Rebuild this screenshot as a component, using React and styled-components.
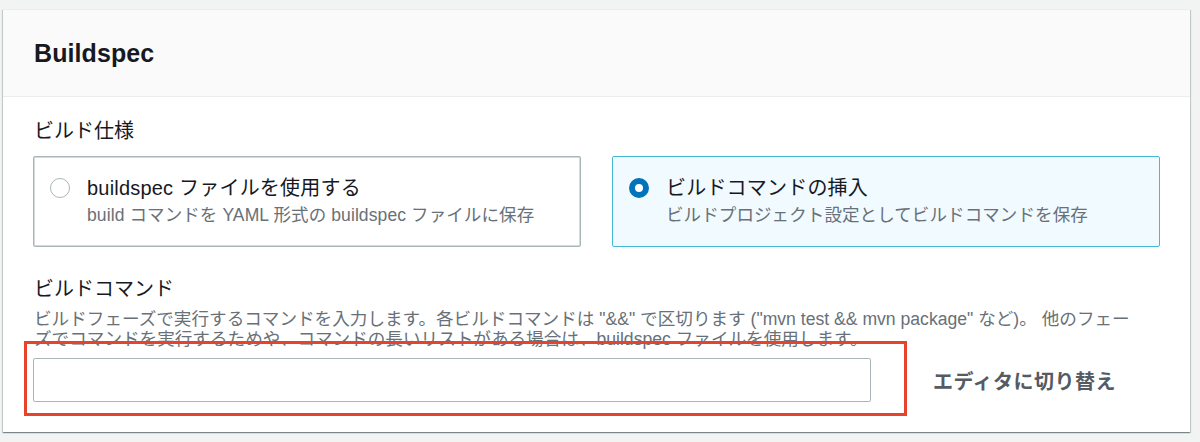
import React from "react";
import styled, { createGlobalStyle } from "styled-components";

const Global = createGlobalStyle`
  html, body { margin: 0; padding: 0; background: #f2f3f3; }
  body {
    font-family: "Liberation Sans", "Noto Sans CJK JP", sans-serif;
    color: #16191f;
  }
`;

const Page = styled.div`
  width: 1200px;
  height: 442px;
  padding: 9px 10px 0 3px;
  box-sizing: border-box;
  overflow: hidden;
`;

const Panel = styled.section`
  background: #fff;
  box-shadow: 0 1px 1px 0 rgba(0, 28, 36, 0.3), 1px 1px 1px 0 rgba(0, 28, 36, 0.15),
    -1px 1px 1px 0 rgba(0, 28, 36, 0.15);
  border-top: 1px solid #eaeded;
`;

const Header = styled.header`
  height: 86px;
  background: #fafafa;
  border-bottom: 1px solid #eaeded;
  display: flex;
  align-items: center;
  padding: 0 31px;
`;

const Title = styled.h2`
  margin: 0;
  font-size: 25px;
  font-weight: 700;
  color: #16191f;
  letter-spacing: 0.1px;
`;

const Body = styled.div`
  padding: 21px 31px 30px 30px;
  display: flex;
  flex-direction: column;
`;

const Label = styled.div`
  font-size: 20px;
  line-height: 26px;
  color: #16191f;
  padding-left: 1px;
`;

const Tiles = styled.div`
  display: grid;
  grid-template-columns: 548px 548px;
  column-gap: 31px;
  margin-top: 12px;
`;

const Tile = styled.label`
  box-sizing: border-box;
  height: 91px;
  display: flex;
  align-items: flex-start;
  gap: 17px;
  padding: 19px 16px 0;
  border: 1px solid ${(p) => (p.$selected ? "#44b9d6" : "#aab7b8")};
  background: ${(p) => (p.$selected ? "#f1faff" : "#fff")};
  border-radius: 2px;
  box-shadow: ${(p) => (p.$selected ? "none" : "inset 0 0 0 0.5px #aab7b8")};
`;

const Radio = styled.span`
  flex: none;
  box-sizing: border-box;
  width: 20px;
  height: 20px;
  margin-top: 2px;
  border-radius: 50%;
  border: ${(p) => (p.$checked ? "6px solid #0073bb" : "1.5px solid #aab7b8")};
  background: #fff;
`;

const TileText = styled.div`
  display: flex;
  flex-direction: column;
`;

const TileTitle = styled.div`
  font-size: 20px;
  line-height: 24px;
  color: #16191f;
  letter-spacing: 0.2px;
`;

const TileDesc = styled.div`
  font-size: 17.5px;
  line-height: 24px;
  margin-top: 3px;
  color: #687078;
  letter-spacing: 0.1px;
`;

const FieldLabel = styled(Label)`
  margin-top: 30px;
  line-height: 24px;
`;

const Desc = styled.div`
  font-size: 17.6px;
  line-height: 20px;
  color: #687078;
  margin-top: 8px;
  padding-left: 1px;
  white-space: nowrap;
`;

const Row = styled.div`
  display: flex;
  align-items: center;
  margin-top: 9px;
`;

const InputWrap = styled.div`
  position: relative;
  display: flex;
`;

const Input = styled.input`
  box-sizing: border-box;
  width: 838px;
  height: 44px;
  border: 1px solid #aab7b8;
  border-radius: 2px;
  background: #fff;
  font: inherit;
  outline: none;
`;

const Highlight = styled.div`
  position: absolute;
  left: -9px;
  top: -17px;
  right: -36px;
  bottom: -14px;
  border: 3px solid #e6422c;
  pointer-events: none;
`;

const SwitchButton = styled.button`
  margin-left: 62px;
  padding: 0;
  border: none;
  background: none;
  font-family: inherit;
  font-size: 20px;
  font-weight: 700;
  color: #545b64;
  letter-spacing: 0.5px;
  cursor: pointer;
`;

export default function App() {
  return (
    <>
      <Global />
      <Page>
        <Panel>
          <Header>
            <Title>Buildspec</Title>
          </Header>
          <Body>
            <Label>ビルド仕様</Label>
            <Tiles>
              <Tile>
                <Radio />
                <TileText>
                  <TileTitle>buildspec ファイルを使用する</TileTitle>
                  <TileDesc>build コマンドを YAML 形式の buildspec ファイルに保存</TileDesc>
                </TileText>
              </Tile>
              <Tile $selected>
                <Radio $checked />
                <TileText>
                  <TileTitle>ビルドコマンドの挿入</TileTitle>
                  <TileDesc>ビルドプロジェクト設定としてビルドコマンドを保存</TileDesc>
                </TileText>
              </Tile>
            </Tiles>
            <FieldLabel>ビルドコマンド</FieldLabel>
            <Desc>
              ビルドフェーズで実行するコマンドを入力します。各ビルドコマンドは "&&" で区切ります ("mvn test && mvn package" など)。 他のフェー
              <br />
              ズでコマンドを実行するためや、コマンドの長いリストがある場合は、buildspec ファイルを使用します。
            </Desc>
            <Row>
              <InputWrap>
                <Input type="text" />
                <Highlight />
              </InputWrap>
              <SwitchButton>エディタに切り替え</SwitchButton>
            </Row>
          </Body>
        </Panel>
      </Page>
    </>
  );
}
